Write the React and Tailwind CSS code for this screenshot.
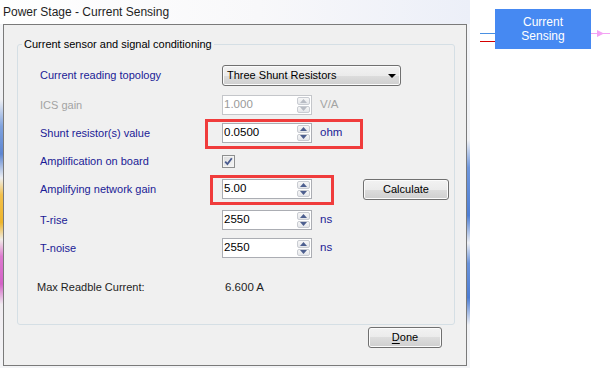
import React from "react";

const ui = { fontFamily: '"Liberation Sans", Arial, sans-serif' };

const labelTone = {
  normal: "text-[#1b1b96]",
  disabled: "text-[#a3a3a3]",
};

function SpinArrow({ up, disabled }) {
  return (
    <div className="flex-1 flex items-center justify-center rounded-[2px] border border-[#c9ccd2] bg-[linear-gradient(to_bottom,#f7f7f7,#e4e6ea)]">
      <svg width="7" height="4" viewBox="0 0 7 4">
        <path
          d={up ? "M0 4 L3.5 0 L7 4 Z" : "M0 0 L3.5 4 L7 0 Z"}
          fill={disabled ? "#b8bcc4" : "#4d5f8f"}
        />
      </svg>
    </div>
  );
}

function SpinBox({ value, disabled }) {
  return (
    <div
      className={
        "flex h-[20px] w-[90px] items-stretch border bg-white " +
        (disabled ? "border-[#c4c6ca]" : "border-[#abadb3]")
      }
    >
      <div
        className={
          "flex flex-1 items-center pl-[1px] text-[11.5px] " +
          (disabled ? "text-[#9a9a9a]" : "text-black")
        }
      >
        {value}
      </div>
      <div className="flex w-[14px] flex-col gap-[1px] py-[1px] pr-[1px]">
        <SpinArrow up disabled={disabled} />
        <SpinArrow disabled={disabled} />
      </div>
    </div>
  );
}

function WinButton({ children, className = "" }) {
  return (
    <div
      className={
        "flex items-center justify-center rounded-[3px] border border-[#707070] bg-[linear-gradient(to_bottom,#f2f2f2_0%,#ebebeb_50%,#dddddd_50%,#cfcfcf_100%)] text-[11px] text-black shadow-[inset_0_0_0_1px_#fbfbfb] " +
        className
      }
    >
      {children}
    </div>
  );
}

function Row({ label, tone = "normal", className = "", children }) {
  return (
    <div className={"flex items-center " + className}>
      <div className={"w-[182px] shrink-0 text-[11px] " + labelTone[tone]}>{label}</div>
      {children}
    </div>
  );
}

function Unit({ children, disabled }) {
  return (
    <span className={"ml-[8px] text-[11.5px] " + (disabled ? "text-[#a3a3a3]" : "text-[#1b1b96]")}>
      {children}
    </span>
  );
}

export default function App() {
  return (
    <div className="relative flex h-[368px] w-[610px] overflow-hidden bg-white" style={ui}>
      {/* dialog window */}
      <div className="flex h-full w-[470px] flex-col bg-[#f7f8fa]">
        <div className="flex h-[24px] items-center bg-[linear-gradient(to_right,#ffffff_0%,#f8f8fa_55%,#eceff8_100%)] pl-[3px] text-[12px] text-[#1e1e1e]">
          Power Stage - Current Sensing
        </div>
        <div className="flex flex-1">
          <div className="w-[3px] bg-[linear-gradient(to_bottom,#f4f5f7_0%,#f0f1f4_22%,#7fa2de_30%,#5d86d2_38%,#eef0f3_45%,#f3c04a_50%,#eeb52a_58%,#f1eee8_63%,#dd79cf_68%,#d461c7_76%,#f1edf1_82%,#f3f4f6_100%)]" />
          <div className="flex h-[342px] flex-1 flex-col border border-[#7a7a7a] bg-[#f0f0f0]">
            <fieldset className="ml-[13px] mr-[11px] mt-[13px] h-[287px] rounded-[3px] border border-[#d5dfe5]">
              <legend className="ml-[4px] px-[2px] text-[11px] leading-[13px] text-black">
                Current sensor and signal conditioning
              </legend>
              <div className="flex flex-col pl-[22px]">
                <Row label="Current reading topology" className="mt-[14px] h-[21px]">
                  <div className="flex h-[21px] w-[179px] items-center justify-between rounded-[3px] border border-[#707070] bg-[linear-gradient(to_bottom,#f2f2f2_0%,#ebebeb_50%,#dddddd_50%,#cfcfcf_100%)] pl-[4px] pr-[4px] text-[11px] text-black shadow-[inset_0_0_0_1px_#fbfbfb]">
                    <span>Three Shunt Resistors</span>
                    <svg width="8" height="4" viewBox="0 0 8 4">
                      <path d="M0 0 L8 0 L4 4 Z" fill="#000" />
                    </svg>
                  </div>
                </Row>
                <Row label="ICS gain" tone="disabled" className="mt-[9px] h-[20px]">
                  <SpinBox value="1.000" disabled />
                  <Unit disabled>V/A</Unit>
                </Row>
                <Row label="Shunt resistor(s) value" className="mt-[8px] h-[20px]">
                  <SpinBox value="0.0500" />
                  <Unit>ohm</Unit>
                </Row>
                <Row label="Amplification on board" className="mt-[12px] h-[13px]">
                  <div className="flex h-[13px] w-[13px] items-center justify-center border border-[#8e8f8f] bg-[linear-gradient(135deg,#dcdcdc,#f6f6f6)] shadow-[inset_0_0_0_1px_#f4f4f4]">
                    <svg width="9" height="9" viewBox="0 0 9 9">
                      <path
                        d="M1.2 4.6 L3.4 7 L7.8 1.2"
                        fill="none"
                        stroke="#4a5b8f"
                        strokeWidth="1.8"
                      />
                    </svg>
                  </div>
                </Row>
                <Row label="Amplifying network gain" className="mt-[11px] h-[20px]">
                  <SpinBox value="5.00" />
                  <WinButton className="ml-[51px] h-[21px] w-[86px]">Calculate</WinButton>
                </Row>
                <Row label="T-rise" className="mt-[11px] h-[20px]">
                  <SpinBox value="2550" />
                  <Unit>ns</Unit>
                </Row>
                <Row label="T-noise" className="mt-[8px] h-[20px]">
                  <SpinBox value="2550" />
                  <Unit>ns</Unit>
                </Row>
                <div className="ml-[-3px] mt-[21px] flex items-center text-[11px] text-[#1e1e1e]">
                  <div className="w-[188px]">Max Readble Current:</div>
                  <div className="text-[11.5px]">6.600 A</div>
                </div>
              </div>
            </fieldset>
            <div className="mt-[2px] flex justify-end pr-[24px]">
              <WinButton className="h-[21px] w-[74px]">
                <span className="underline underline-offset-[2px]">D</span>one
              </WinButton>
            </div>
          </div>
          <div className="w-[3px] bg-[linear-gradient(to_bottom,#f4f5f8_0%,#f1f2f5_34%,#6f97dc_42%,#4f7fd4_56%,#eef0f4_64%,#6a93da_70%,#4d7dd3_80%,#f1f2f5_88%,#f4f5f7_100%)]" />
        </div>
        <div className="h-[2px] bg-[#f3f4f6]" />
      </div>

      {/* block diagram canvas */}
      <div className="relative flex-1">
        <div className="absolute left-[10px] top-[33px] h-[1px] w-[15px] bg-[#4a90e2]" />
        <div className="absolute left-[10px] top-[41px] h-[1px] w-[15px] bg-[#d40000]" />
        <div className="absolute left-[25px] top-[9px] flex h-[40px] w-[96px] flex-col items-center justify-center bg-[#4689f2] text-[12px] leading-[14px] text-white">
          <span>Current</span>
          <span>Sensing</span>
        </div>
        <div className="absolute left-[121px] top-[33px] h-[1px] w-[19px] bg-[#f4a3f4]" />
        <svg className="absolute left-[127px] top-[30px]" width="7" height="7" viewBox="0 0 7 7">
          <path d="M0 0 L7 3.5 L0 7 Z" fill="#f4a3f4" />
        </svg>
      </div>

      {/* review annotations */}
      <div className="pointer-events-none absolute left-[205px] top-[119px] h-[30px] w-[158px] border-[3px] border-[#f03c3c]" />
      <div className="pointer-events-none absolute left-[210px] top-[175px] h-[30px] w-[124px] border-[3px] border-[#f03c3c]" />
    </div>
  );
}
